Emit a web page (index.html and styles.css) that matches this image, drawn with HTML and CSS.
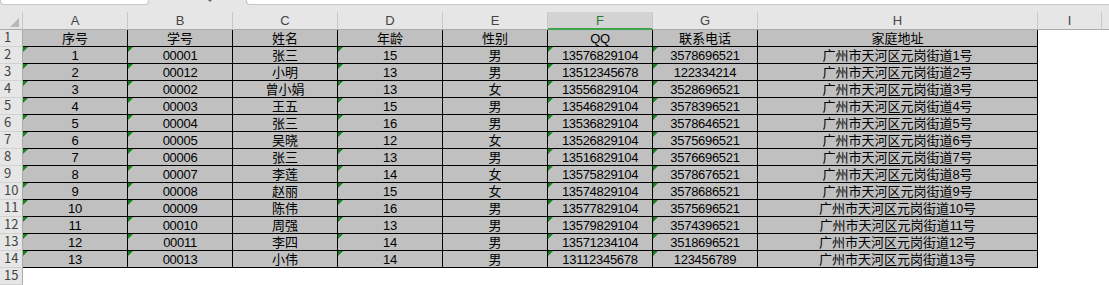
FILE: index.html
```html
<!DOCTYPE html>
<html lang="zh-CN">
<head>
<meta charset="utf-8">
<title>Sheet</title>
<link rel="stylesheet" href="styles.css">
</head>
<body>
<div class="top">
  <div class="namebox"></div>
  <div class="arrow"></div>
  <div class="fx"></div>
</div>
<div class="sheet">
  <div class="hdr">
    <div class="corner"><span class="tri"></span></div>
    <div class="ch">A</div><div class="ch">B</div><div class="ch">C</div><div class="ch">D</div>
    <div class="ch">E</div><div class="ch sel">F</div><div class="ch">G</div><div class="ch w">H</div>
    <div class="ch i">I</div><div class="ch fill"></div>
  </div>
  <div class="row"><div class="rh">1</div><div class="c">序号</div><div class="c">学号</div><div class="c">姓名</div><div class="c">年龄</div><div class="c">性别</div><div class="c q">QQ</div><div class="c">联系电话</div><div class="c w">家庭地址</div><div class="e"></div></div>
  <div class="row"><div class="rh">2</div><div class="c t">1</div><div class="c t">00001</div><div class="c">张三</div><div class="c t">15</div><div class="c">男</div><div class="c t">13576829104</div><div class="c t">3578696521</div><div class="c w">广州市天河区元岗街道<span class="n">1</span>号</div><div class="e"></div></div>
  <div class="row"><div class="rh">3</div><div class="c t">2</div><div class="c t">00012</div><div class="c">小明</div><div class="c t">13</div><div class="c">男</div><div class="c t">13512345678</div><div class="c t">122334214</div><div class="c w">广州市天河区元岗街道<span class="n">2</span>号</div><div class="e"></div></div>
  <div class="row"><div class="rh">4</div><div class="c t">3</div><div class="c t">00002</div><div class="c">曾小娟</div><div class="c t">13</div><div class="c">女</div><div class="c t">13556829104</div><div class="c t">3528696521</div><div class="c w">广州市天河区元岗街道<span class="n">3</span>号</div><div class="e"></div></div>
  <div class="row"><div class="rh">5</div><div class="c t">4</div><div class="c t">00003</div><div class="c">王五</div><div class="c t">15</div><div class="c">男</div><div class="c t">13546829104</div><div class="c t">3578396521</div><div class="c w">广州市天河区元岗街道<span class="n">4</span>号</div><div class="e"></div></div>
  <div class="row"><div class="rh">6</div><div class="c t">5</div><div class="c t">00004</div><div class="c">张三</div><div class="c t">16</div><div class="c">男</div><div class="c t">13536829104</div><div class="c t">3578646521</div><div class="c w">广州市天河区元岗街道<span class="n">5</span>号</div><div class="e"></div></div>
  <div class="row"><div class="rh">7</div><div class="c t">6</div><div class="c t">00005</div><div class="c">吴晓</div><div class="c t">12</div><div class="c">女</div><div class="c t">13526829104</div><div class="c t">3575696521</div><div class="c w">广州市天河区元岗街道<span class="n">6</span>号</div><div class="e"></div></div>
  <div class="row"><div class="rh">8</div><div class="c t">7</div><div class="c t">00006</div><div class="c">张三</div><div class="c t">13</div><div class="c">男</div><div class="c t">13516829104</div><div class="c t">3576696521</div><div class="c w">广州市天河区元岗街道<span class="n">7</span>号</div><div class="e"></div></div>
  <div class="row"><div class="rh">9</div><div class="c t">8</div><div class="c t">00007</div><div class="c">李莲</div><div class="c t">14</div><div class="c">女</div><div class="c t">13575829104</div><div class="c t">3578676521</div><div class="c w">广州市天河区元岗街道<span class="n">8</span>号</div><div class="e"></div></div>
  <div class="row"><div class="rh">10</div><div class="c t">9</div><div class="c t">00008</div><div class="c">赵丽</div><div class="c t">15</div><div class="c">女</div><div class="c t">13574829104</div><div class="c t">3578686521</div><div class="c w">广州市天河区元岗街道<span class="n">9</span>号</div><div class="e"></div></div>
  <div class="row"><div class="rh">11</div><div class="c t">10</div><div class="c t">00009</div><div class="c">陈伟</div><div class="c t">16</div><div class="c">男</div><div class="c t">13577829104</div><div class="c t">3575696521</div><div class="c w">广州市天河区元岗街道<span class="n">10</span>号</div><div class="e"></div></div>
  <div class="row"><div class="rh">12</div><div class="c t">11</div><div class="c t">00010</div><div class="c">周强</div><div class="c t">13</div><div class="c">男</div><div class="c t">13579829104</div><div class="c t">3574396521</div><div class="c w">广州市天河区元岗街道<span class="n">11</span>号</div><div class="e"></div></div>
  <div class="row"><div class="rh">13</div><div class="c t">12</div><div class="c t">00011</div><div class="c">李四</div><div class="c t">14</div><div class="c">男</div><div class="c t">13571234104</div><div class="c t">3518696521</div><div class="c w">广州市天河区元岗街道<span class="n">12</span>号</div><div class="e"></div></div>
  <div class="row"><div class="rh">14</div><div class="c t">13</div><div class="c t">00013</div><div class="c">小伟</div><div class="c t">14</div><div class="c">男</div><div class="c t">13112345678</div><div class="c t">123456789</div><div class="c w">广州市天河区元岗街道<span class="n">13</span>号</div><div class="e"></div></div>
  <div class="row"><div class="rh">15</div><div class="e"></div></div>
</div>
</body>
</html>
```
FILE: styles.css
```css
html, body {
  margin: 0;
  padding: 0;
  background: #ffffff;
  overflow: hidden;
}
body {
  width: 1109px;
  height: 285px;
  font-family: "Noto Sans CJK SC", sans-serif;
}
.top {
  display: flex;
  height: 12px;
  background: #e6e6e6;
}
.namebox {
  width: 149px;
  height: 5px;
  box-sizing: border-box;
  background: #ffffff;
  border: 1px solid #c6c6c6;
  border-top: none;
  border-radius: 0 0 4px 4px;
}
.arrow {
  width: 0;
  height: 0;
  margin-left: 59px;
  border-top: 2px solid #666666;
  border-left: 2px solid transparent;
  border-right: 2px solid transparent;
}
.fx {
  flex: 1;
  height: 5px;
  margin-left: 34px;
  box-sizing: border-box;
  background: #ffffff;
  border-left: 1px solid #c6c6c6;
  border-bottom: 1px solid #c6c6c6;
  border-radius: 0 0 0 4px;
}
.sheet {
  display: flex;
  flex-direction: column;
}
.hdr {
  display: flex;
  height: 18px;
  background: #e6e6e6;
}
.corner {
  position: relative;
  width: 23px;
  flex: none;
  box-sizing: border-box;
  border-right: 1px solid #c8c8c8;
  border-bottom: 1px solid #ababab;
}
.tri {
  position: absolute;
  right: 3px;
  bottom: 2px;
  width: 0;
  height: 0;
  border-bottom: 9px solid #b9b9b9;
  border-left: 9px solid transparent;
}
.ch {
  width: 105px;
  flex: none;
  box-sizing: border-box;
  border-right: 1px solid #c8c8c8;
  border-bottom: 1px solid #ababab;
  text-align: center;
  font-family: "Liberation Sans", sans-serif;
  font-size: 13px;
  line-height: 16px;
  padding-top: 1px;
  color: #444444;
}
.ch.sel {
  background: #d3d3d3;
  color: #2b7a3b;
  border-bottom: 2px solid #3fa34d;
}
.ch.w { width: 280px; }
.ch.i { width: 64px; }
.ch.fill { flex: 1; border-right: none; }
.row {
  display: flex;
  height: 17px;
}
.rh {
  width: 23px;
  flex: none;
  box-sizing: border-box;
  background: #e6e6e6;
  border-right: 1px solid #ababab;
  border-bottom: 1px solid #d2d2d2;
  padding-left: 4px;
  font-family: "Noto Sans CJK SC", sans-serif;
  font-size: 13px;
  line-height: 14px;
  color: #444444;
}
.c {
  position: relative;
  width: 105px;
  flex: none;
  box-sizing: border-box;
  background: #c0c0c0;
  border-right: 1px solid #000000;
  border-bottom: 1px solid #000000;
  text-align: center;
  font-size: 13px;
  line-height: 16px;
  color: #000000;
  white-space: nowrap;
}
.c.w { width: 280px; }
.t, .q {
  font-family: "Liberation Sans", sans-serif;
  font-size: 13px;
  letter-spacing: -0.3px;
  line-height: 18px;
}
.n {
  font-family: "Liberation Sans", sans-serif;
  font-size: 13px;
  letter-spacing: -0.3px;
}
.t::before {
  content: "";
  position: absolute;
  top: 0;
  left: 0;
  width: 0;
  height: 0;
  border-top: 5px solid #13831a;
  border-right: 5px solid transparent;
}
.e {
  flex: 1;
  background: #ffffff;
}
```
